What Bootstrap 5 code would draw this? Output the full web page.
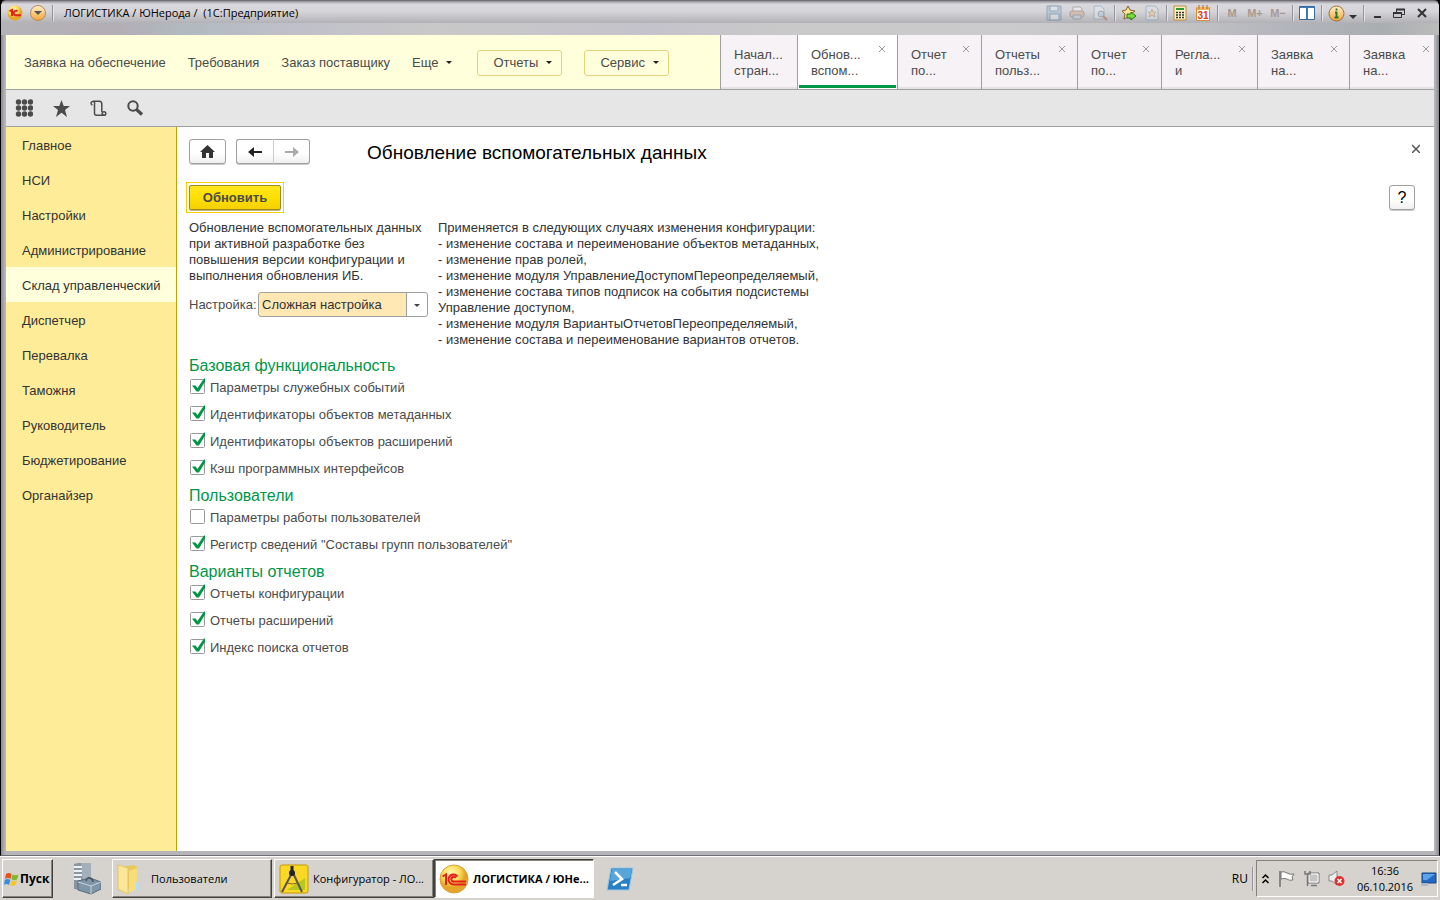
<!DOCTYPE html>
<html lang="ru">
<head>
<meta charset="utf-8">
<meta name="viewport" content="width=device-width, initial-scale=1">
<title>Обновление вспомогательных данных</title>
<link href="https://cdn.jsdelivr.net/npm/bootstrap@5.3.0/dist/css/bootstrap.min.css" rel="stylesheet">
<style>
  :root { --ink:#4b4b4b; --line:#a0a0a0; --green:#009646; --sand:#ffec99; --cream:#ffffdc; }
  body { font: 13px/16px "Liberation Sans", Arial, sans-serif; color:#333; background:#000; }
  button { font: inherit; color: inherit; }
  svg { display:block; flex:none; }
  .bare { border:0; background:none; padding:0; }

  .window-frame { border:1px solid #706d74; border-left-color:#000; border-right-color:#000; border-radius:6px 6px 0 0; background:linear-gradient(90deg,#8e8c91,#b5b4b9 4px,#b5b4b9 calc(100% - 4px),#85888e); padding:0 5px 4px 5px; }
  .caption-bar { height:34px; margin:0 -5px; padding:0 12px 10px 5px; border-radius:5px 5px 0 0; color:#000; font-family:"Open Sans","Noto Sans",sans-serif; font-size:11px;
    background:linear-gradient(#8f8d94,#d9d8dc 3px,#d6d5d9 10px,#b2b1b5 22px,transparent 22px),linear-gradient(90deg,#b4b3b7,#b3adb5 8%,#b1bac0 13%,#bfbfca 20%,#c8c8c8 30%,#c4c3cb 45%,#c9c9c9 55%,#cbcbcd 70%,#c2c2c4 82%,#b2b4bb 90%,#a9aeb0 96%,#bbb); }
  .caption-text { white-space:pre; padding-left:3px; }
  .cmds { gap:7px; }
  .cmds .sep { margin:0 -1px; }
  .sep { width:1px; height:16px; background:#96959b; box-shadow:1px 0 #e4e3e7; }
  .dim { opacity:.45; }
  .mem { color:#a8998f; font:bold 11px/16px "Liberation Sans",sans-serif; min-width:16px; text-align:center; }

  .app-head { background:var(--cream); border-bottom:1px solid var(--line); height:55px; color:var(--ink); }
  .app-head a { color:inherit; text-decoration:none; }
  .app-nav { padding:1px 0 0 18px; gap:22px; }
  .menu-btn { border:1px solid #e5d27c; border-radius:3px; height:26px; width:85px; padding:0 9px 0 15px; }
  .menu-set { gap:22px; margin-left:3px; }
  .tri { width:0; height:0; border:3px solid transparent; border-top-color:#222; border-bottom:0; }
  .wtabs { height:54px; }
  .wtab { position:relative; background:#f7f2f6; border-left:1px solid var(--line); width:96px; padding:12px 0 0 13px; color:var(--ink); text-align:left; box-shadow:inset 0 -2px 1px #e5e1e4; }
  .w-s { width:84px; } .w-m { width:92px; } .w-l { width:100px; } .w-h { width:77px; } .w-e { width:85px; }
  .wtab.open { background:#fff; box-shadow:inset 0 -1px #fff; }
  .wtab.open::after { content:""; position:absolute; left:1px; right:1px; bottom:1px; height:3px; background:var(--green); }
  .wtab .bare { position:absolute; right:12px; top:11px; }
  .w-e .bare { right:5px; }
  .toolstrip { background:#e6e6e6; border-bottom:1px solid var(--line); height:37px; padding:0 9px; gap:20px; color:var(--ink); }

  .sections { width:171px; background:var(--sand); border-right:1px solid #bfa500; }
  .sections a { display:block; height:35px; padding:11px 16px 8px; color:#333; text-decoration:none; white-space:nowrap; }
  .sections a.current { background:var(--cream); }
  .page { background:#fff; padding:12px 14px 0 12px; }
  .nbtn { height:25px; width:37px; border:1px solid var(--line); border-radius:3px; background:linear-gradient(#fff 55%,#f0f0f0); box-shadow:0 1px #c9c9c9; padding:0; }
  .nbtn.help { width:26px; font-size:16px; color:#000; }
  .nav-pair { margin-left:10px; }
  .nav-pair .nbtn + .nbtn { border-left:0; }
  .nav-pair .nbtn:first-child { width:38px; border-right-color:#ccc; }
  .nav-pair .nbtn:last-child { width:36px; }
  .page h1 { font-size:19px; line-height:27px; color:#000; font-weight:400; margin:0 0 0 57px; }
  .page-top { height:25px; }
  .act-row { margin:18px 5px 7px 0; }
  .go-ring { border:1px solid #ffcc00; padding:2px; margin-left:-3px; }
  .go { height:25px; width:92px; border:1px solid #a08a1a; border-radius:2px; background:linear-gradient(#ffe620,#ffe000 50%,#f5d000); box-shadow:0 1px #b9b28a; color:var(--ink); font-weight:700; padding:0; }
  .col-a { width:239px; margin-right:10px; white-space:nowrap; } .col-b { width:390px; }
  .lbl { color:var(--ink); }
  .pick { appearance:none; width:170px; height:25px; border:1px solid var(--line); border-radius:3px; padding:0 24px 0 3px; color:#333; font:inherit;
    background:url("data:image/svg+xml,%3Csvg xmlns='http://www.w3.org/2000/svg' width='21' height='23'%3E%3Cpath fill='%23fff' d='M0 0h21v23H0z'/%3E%3Cpath fill='%23a0a0a0' d='M0 0h1v23H0z'/%3E%3Cpath fill='%23444' d='M8 11h6l-3 3z'/%3E%3C/svg%3E") right center no-repeat #ffe8b4; }
  .page h2 { font-size:16px; line-height:17px; font-weight:400; color:var(--green); margin:0; padding-top:5px; }
  .tick { height:27px; color:var(--ink); }
  .tick input { appearance:none; margin:0 0 0 1px; width:16px; height:20px; background:url("data:image/svg+xml,%3Csvg xmlns='http://www.w3.org/2000/svg' width='16' height='18'%3E%3Crect x='.5' y='1.5' width='14' height='14' rx='1' fill='%23fff' stroke='%23999'/%3E%3C/svg%3E") no-repeat; }
  .tick input:checked { background-image:url("data:image/svg+xml,%3Csvg xmlns='http://www.w3.org/2000/svg' width='16' height='18'%3E%3Crect x='.5' y='1.5' width='14' height='14' rx='1' fill='%23fff' stroke='%23999'/%3E%3Cpath fill='%23009646' d='M2 7.500h3.500l2 2.500L14 .500h1v3L9 13.500H6.500z'/%3E%3C/svg%3E"); }

  .taskbar { height:44px; background:#d6d3ce; border-top:1px solid #fff; padding:2px; color:#000; font:11px/16px "Open Sans","Noto Sans",sans-serif; }
  .task { height:39px; width:160px; border:1px solid; border-color:#fff #404040 #404040 #fff; box-shadow:inset -1px -1px #858279; background:none; padding:0 4px; white-space:nowrap; }
  .task.live { border-color:#404040 #fff #fff #404040; box-shadow:inset 1px 1px #858279; background:#fff; font-weight:700; }
  .task.start { width:51px; padding:0 1px; font-size:12px; font-weight:700; }
  .srv { margin:0 11px 0 20px; }
  .tray { border:1px solid; border-color:#858279 #fff #fff #858279; height:37px; gap:8px; padding:0 0 0 4px; }
  .clock { padding:0 0 0 4px; }
  .lang { font-size:12px; }
  .lang-sep { height:24px; margin:0 3px 0 4px; }
</style>
</head>
<body class="min-vh-100 d-flex flex-column">

<div class="window-frame flex-grow-1 d-flex flex-column">
  <header class="caption-bar d-flex align-items-center">
    <svg width="18" height="18" viewBox="0 0 18 18"><defs><radialGradient id="gold" cx=".4" cy=".3"><stop offset="0" stop-color="#fff8c0"/><stop offset=".6" stop-color="#ffdf58"/><stop offset="1" stop-color="#e6a428"/></radialGradient><linearGradient id="amber" x2="0" y2="1"><stop offset="0" stop-color="#fff0d0"/><stop offset="1" stop-color="#f7a535"/></linearGradient></defs><circle cx="9" cy="9" r="7.500" fill="url(#gold)"/><path d="M3.500 7.200L6 6v6M11.500 7.300a2.300 2.300 0 1 0-1 4H15" fill="none" stroke="#e02418" stroke-width="2"/></svg>
    <svg class="ms-1" width="20" height="18" viewBox="0 0 20 18"><circle cx="10" cy="9" r="7.500" fill="url(#amber)" stroke="#b98a55"/><path d="M6 7h8l-4 4z" fill="#555"/></svg>
    <span class="sep ms-1 me-2"></span>
    <span class="caption-text">ЛОГИСТИКА / ЮНерода /  (1С:Предприятие)</span>
    <div class="cmds d-flex align-items-center ms-auto">
      <button class="bare dim" aria-label="Сохранить"><svg width="16" height="16"><path d="M1 1h14v14H1z" fill="#9bb9d0" stroke="#4a7798"/><path d="M4 1h8v5H4zM4 9h9v6H4z" fill="#e4edf3" stroke="#4a7798"/></svg></button>
      <button class="bare dim" aria-label="Печать"><svg width="16" height="16"><path d="M4 2h7l2 2v4H4z" fill="#fff" stroke="#777"/><rect x="1" y="6" width="14" height="6" rx="2" fill="#d9a98a" stroke="#776a62"/><path d="M4 10h8v4H4z" fill="#b8d0ec" stroke="#777"/></svg></button>
      <button class="bare dim" aria-label="Просмотр"><svg width="16" height="16"><path d="M2 1h7l3 3v10H2z" fill="#e4ebf2" stroke="#6f93b0"/><circle cx="9" cy="9" r="3" fill="#a8c9e4" stroke="#777"/><path d="M11 11l4 4" stroke="#a0522d" stroke-width="2"/></svg></button>
      <span class="sep"></span>
      <button class="bare" aria-label="В избранное"><svg width="16" height="16"><path d="M7 1l2 4 5 1-4 3 1 5-4-2-4 2 1-5-3-3 4-1z" fill="#ffe39a" stroke="#83622a"/><path d="M6 9h4V7l5 4-5 4v-2H6z" fill="#7ddc38" stroke="#277b13"/></svg></button>
      <button class="bare dim" aria-label="Избранное"><svg width="16" height="16" viewBox="-1 0 16 16"><path d="M1 1h9l3 3v11H1z" fill="#e0e6ee" stroke="#7290a8"/><path d="M7 4l1 3h3L9 9l1 3-3-2-3 2 1-3-2-2h3z" fill="#f4d08a" stroke="#93733a" stroke-width=".7"/></svg></button>
      <span class="sep"></span>
      <button class="bare" aria-label="Калькулятор"><svg width="16" height="16"><path d="M1 1h12v14H1z" fill="#fff1c4" stroke="#c08a38"/><path d="M3 3h8v2H3z" fill="#2d9b2d"/><path d="M3 7.500h8M3 10h8M3 12.500h8" stroke="#333" stroke-width="1.500" stroke-dasharray="2 1"/></svg></button>
      <button class="bare" aria-label="Календарь"><svg width="15" height="16"><path d="M.5 2.500h13v13H.5z" fill="#fff" stroke="#d98a3a"/><path d="M1 2h12v3H1z" fill="#f5b45c"/><path d="M3 0v4M7 0v4M11 0v4" stroke="#a86b29"/><text x="7" y="14" text-anchor="middle" font-family="Liberation Sans" font-size="10" font-weight="700" fill="#e03a10">31</text></svg></button>
      <span class="sep"></span>
      <button class="bare mem">M</button><button class="bare mem">M+</button><button class="bare mem">M−</button>
      <span class="sep"></span>
      <button class="bare" aria-label="Панели"><svg width="16" height="14"><path d="M.5 .5h15v13H.5z" fill="#fff" stroke="#3c6b99"/><path d="M1 1h14v1H1z" fill="#3c7ab8"/><path d="M8 2v11" stroke="#3c7ab8" stroke-width="2"/></svg></button>
      <span class="sep"></span>
      <button class="bare d-flex align-items-center gap-1" aria-label="Справка"><svg width="17" height="17" viewBox="0 0 17 17"><circle cx="8.500" cy="8.500" r="7.500" fill="url(#amber)" stroke="#9b7038"/><path d="M8.500 3.500v2M7 7.500h1.500V12M6.500 12.500h4" stroke="#237823" stroke-width="1.800" fill="none"/></svg><svg width="8" height="14"><path d="M0 9h8l-4 4z" fill="#333"/></svg></button>
      <span class="sep"></span>
      <button class="bare" aria-label="Свернуть"><svg width="14" height="12"><path d="M4 10h7" stroke="#333" stroke-width="2"/></svg></button>
      <button class="bare" aria-label="Развернуть"><svg width="15" height="11" viewBox="-2 0 15 11"><path d="M3.500 4V1.500h8v5H9" fill="none" stroke="#333"/><path d="M3 1.500h9M0 5h9" stroke="#333" stroke-width="2"/><path d="M.5 4.500h8v5h-8z" fill="none" stroke="#333"/></svg></button>
      <button class="bare ms-1" aria-label="Закрыть"><svg width="10" height="10"><path d="M1 1l8 8M9 1l-8 8" stroke="#333" stroke-width="2"/></svg></button>
    </div>
  </header>

  <div class="app-head d-flex justify-content-between">
    <nav class="app-nav d-flex align-items-center">
      <a href="#">Заявка на обеспечение</a>
      <a href="#">Требования</a>
      <a href="#">Заказ поставщику</a>
      <a href="#" class="d-flex align-items-center">Еще<span class="tri ms-2"></span></a>
      <div class="menu-set d-flex">
        <button class="menu-btn bg-transparent d-flex align-items-center justify-content-between">Отчеты<span class="tri"></span></button>
        <button class="menu-btn bg-transparent d-flex align-items-center justify-content-between">Сервис<span class="tri"></span></button>
      </div>
    </nav>
    <div class="wtabs d-flex">
      <div class="wtab w-h"><a href="#">Начал...<br>стран...</a></div>
      <div class="wtab w-l open"><a href="#">Обнов...<br>вспом...</a><button class="bare" aria-label="Закрыть"><svg width="6" height="6"><path d="M0 0l6 6M6 0l-6 6" stroke="#999"/></svg></button></div>
      <div class="wtab w-s"><a href="#">Отчет<br>по...</a><button class="bare" aria-label="Закрыть"><svg width="6" height="6"><path d="M0 0l6 6M6 0l-6 6" stroke="#999"/></svg></button></div>
      <div class="wtab"><a href="#">Отчеты<br>польз...</a><button class="bare" aria-label="Закрыть"><svg width="6" height="6"><path d="M0 0l6 6M6 0l-6 6" stroke="#999"/></svg></button></div>
      <div class="wtab w-s"><a href="#">Отчет<br>по...</a><button class="bare" aria-label="Закрыть"><svg width="6" height="6"><path d="M0 0l6 6M6 0l-6 6" stroke="#999"/></svg></button></div>
      <div class="wtab"><a href="#">Регла...<br>и</a><button class="bare" aria-label="Закрыть"><svg width="6" height="6"><path d="M0 0l6 6M6 0l-6 6" stroke="#999"/></svg></button></div>
      <div class="wtab w-m"><a href="#">Заявка<br>на...</a><button class="bare" aria-label="Закрыть"><svg width="6" height="6"><path d="M0 0l6 6M6 0l-6 6" stroke="#999"/></svg></button></div>
      <div class="wtab w-e"><a href="#">Заявка<br>на...</a><button class="bare" aria-label="Закрыть"><svg width="6" height="6"><path d="M0 0l6 6M6 0l-6 6" stroke="#999"/></svg></button></div>
    </div>
  </div>

  <div class="toolstrip d-flex align-items-center">
    <button class="bare" aria-label="Меню функций"><svg width="18" height="18" fill="#4b4b4b"><g id="dots"><circle cx="3.500" cy="3" r="2.700"/><circle cx="9.500" cy="3" r="2.700"/><circle cx="15.500" cy="3" r="2.700"/></g><use href="#dots" y="6"/><use href="#dots" y="12"/></svg></button>
    <button class="bare" aria-label="Избранное"><svg width="17" height="17" viewBox="0 0 17 17"><path d="M8.500 0l2.200 6H17l-5 3.900L14 17l-5.500-4.300L3 17l2-7.100L0 6h6.300z" fill="#4b4b4b"/></svg></button>
    <button class="bare" aria-label="История"><svg width="17" height="17" viewBox="0 0 17 17" fill="none" stroke="#4b4b4b" stroke-width="1.500"><path d="M4.500 4V13.500Q4.500 15.200 6.500 15.200H14M4.500 4A1.800 1.800 0 1 0 2.500 5M2.500 1.200H9.500Q11.800 1.200 11.800 4V12"/><circle cx="14" cy="13.500" r="1.800"/></svg></button>
    <button class="bare" aria-label="Поиск"><svg width="17" height="17" viewBox="0 0 17 17" fill="none" stroke="#4b4b4b"><circle cx="6" cy="6" r="4.700" stroke-width="2"/><path d="M9.500 9.500l5.500 5" stroke-width="3.200"/></svg></button>
  </div>

  <div class="d-flex flex-grow-1">
    <nav class="sections flex-shrink-0">
      <a href="#">Главное</a><a href="#">НСИ</a><a href="#">Настройки</a><a href="#">Администрирование</a><a href="#" class="current">Склад управленческий</a><a href="#">Диспетчер</a><a href="#">Перевалка</a><a href="#">Таможня</a><a href="#">Руководитель</a><a href="#">Бюджетирование</a><a href="#">Органайзер</a>
    </nav>
    <main class="page flex-grow-1">
      <div class="page-top d-flex align-items-start">
        <button class="nbtn d-flex align-items-center justify-content-center" aria-label="Домой"><svg width="15" height="13"><path d="M7.500 0L15 7h-2v6H9V8H6v5H2V7H0z" fill="#333"/></svg></button>
        <div class="btn-group nav-pair">
          <button class="nbtn rounded-end-0 d-flex align-items-center justify-content-center" aria-label="Назад"><svg width="14" height="10"><path d="M0 5l6-5v4h8v2H6v4z" fill="#222"/></svg></button>
          <button class="nbtn rounded-start-0 d-flex align-items-center justify-content-center" aria-label="Вперед"><svg width="14" height="10"><path d="M14 5L8 0v4H0v2h8v4z" fill="#aaa"/></svg></button>
        </div>
        <h1>Обновление вспомогательных данных</h1>
        <button class="bare ms-auto pt-1" aria-label="Закрыть"><svg width="8" height="10" viewBox="0 -2 8 10"><path d="M0 0l8 8M8 0l-8 8" stroke="#555" stroke-width="1.500"/></svg></button>
      </div>
      <div class="act-row d-flex align-items-center justify-content-between">
        <div class="go-ring"><button class="go">Обновить</button></div>
        <button class="nbtn help">?</button>
      </div>
      <div class="d-flex">
        <div class="col-a">
          <p class="m-0">Обновление вспомогательных данных<br>при активной разработке без<br>повышения версии конфигурации и<br>выполнения обновления ИБ.</p>
          <div class="d-flex align-items-center justify-content-between mt-2">
            <label for="mode" class="lbl">Настройка:</label>
            <select id="mode" class="pick"><option>Сложная настройка</option></select>
          </div>
        </div>
        <p class="col-b m-0">Применяется в следующих случаях изменения конфигурации:<br>- изменение состава и переименование объектов метаданных,<br>- изменение прав ролей,<br>- изменение модуля УправлениеДоступомПереопределяемый,<br>- изменение состава типов подписок на события подсистемы<br>Управление доступом,<br>- изменение модуля ВариантыОтчетовПереопределяемый,<br>- изменение состава и переименование вариантов отчетов.</p>
      </div>
      <section class="pt-1">
        <h2>Базовая функциональность</h2>
        <label class="tick d-flex align-items-center gap-1"><input type="checkbox" checked>Параметры служебных событий</label>
        <label class="tick d-flex align-items-center gap-1"><input type="checkbox" checked>Идентификаторы объектов метаданных</label>
        <label class="tick d-flex align-items-center gap-1"><input type="checkbox" checked>Идентификаторы объектов расширений</label>
        <label class="tick d-flex align-items-center gap-1"><input type="checkbox" checked>Кэш программных интерфейсов</label>
        <h2>Пользователи</h2>
        <label class="tick d-flex align-items-center gap-1"><input type="checkbox">Параметры работы пользователей</label>
        <label class="tick d-flex align-items-center gap-1"><input type="checkbox" checked>Регистр сведений "Составы групп пользователей"</label>
        <h2>Варианты отчетов</h2>
        <label class="tick d-flex align-items-center gap-1"><input type="checkbox" checked>Отчеты конфигурации</label>
        <label class="tick d-flex align-items-center gap-1"><input type="checkbox" checked>Отчеты расширений</label>
        <label class="tick d-flex align-items-center gap-1"><input type="checkbox" checked>Индекс поиска отчетов</label>
      </section>
    </main>
  </div>
</div>

<footer class="taskbar d-flex align-items-center">
  <button class="task start d-flex align-items-center"><svg width="16" height="16" viewBox="0 0 16 16"><path d="M2 3q3-2 5.500 0L6.500 8Q4 6 1 8z" fill="#e8501e"/><path d="M8.500 3.500q3 1.500 6 0L13 8.500q-3 1.500-5.500 0z" fill="#7cba2c"/><path d="M.8 9q3-2 5.500 0L5 14q-2.500-2-5 0z" fill="#3b8ade"/><path d="M7.300 9.500q3 1.500 5.700 0L11.500 14q-3 1.500-5.500 0z" fill="#fbc521"/></svg>Пуск</button>
  <button class="bare srv" aria-label="Диспетчер сервера"><svg width="28" height="32"><path d="M1 1l4-1h13v22l-5 6-12-2z" fill="#8695a0"/><path d="M8 0h10v20H10z" fill="#a3b0ba"/><path d="M1 4h8M1 8h8M1 12h8M1 16h7" stroke="#eef2f5" stroke-width="2"/><path d="M5 18l12-3 11 4v7l-10 5-13-4z" fill="#7f95a8" stroke="#566b7a"/><path d="M5 19l13 4 10-4M18 23v8" stroke="#c7d3dc" fill="none"/><path d="M13 18q1-4 4-3t3 4" fill="none" stroke="#46525c" stroke-width="1.500"/></svg></button>
  <button class="task d-flex align-items-center"><svg class="me-2" width="26" height="32"><path d="M9 3l8-1 3 2v18l-10 5z" fill="#e8c95c"/><path d="M1 2l10 3v26L1 26z" fill="#fbe79a" stroke="#e5c65c"/><path d="M12 8l8-3v21l-8 4z" fill="#f7dd7c"/><path d="M19 19h3v8h-3z" fill="#b8dcf0"/></svg>Пользователи</button>
  <button class="task d-flex align-items-center" style="margin-left:2px"><svg class="me-1" width="30" height="30"><rect x="1" y="1" width="28" height="28" rx="2" fill="#fbd825" stroke="#c59a00"/><path d="M8 26h18V14z" fill="#b6c820"/><path d="M13 9L3 28M14 9l9 19" stroke="#555" stroke-width="2"/><path d="M13 2v5" stroke="#222" stroke-width="3"/><circle cx="13" cy="9" r="3" fill="#222"/><path d="M8 19q5 2 11 0" fill="none" stroke="#7a6720"/></svg>Конфигуратор - ЛО...</button>
  <button class="task live d-flex align-items-center"><svg class="me-1" width="30" height="30" viewBox="0 0 30 30"><circle cx="15" cy="15" r="14" fill="url(#gold)" stroke="#d6a13a"/><path d="M3.500 12.500L7 10.500V21M18.500 12.500A5 5 0 1 0 15 20.500H27M16.800 14A2.400 2.400 0 1 0 15 17.600H27" fill="none" stroke="#e3231b" stroke-width="2"/></svg>ЛОГИСТИКА / ЮНе...</button>
  <button class="bare ms-2 ps-1" aria-label="PowerShell"><svg width="28" height="24"><path d="M5 1h22l-4 22H1z" fill="#2a80c4" stroke="#9cc8e8"/><path d="M6 2h20l-2 9-20 3z" fill="#58a5dc"/><path d="M9 5l7 7-9 6M15 18h6" fill="none" stroke="#fff" stroke-width="2.500"/></svg></button>
  <div class="d-flex align-items-center ms-auto">
    <span class="lang">RU</span><span class="sep lang-sep"></span>
    <div class="tray d-flex align-items-center">
      <svg width="9" height="12"><path d="M1.500 5l3-3 3 3M1.500 10l3-3 3 3" fill="none" stroke="#000" stroke-width="1.500"/></svg>
      <svg width="17" height="18"><path d="M2 1v16" stroke="#888" stroke-width="2"/><path d="M3 2q3-1 6 1 3 2 7 1l-2 3 1 3q-4 1-6-1-3-1-6 0z" fill="#fff" stroke="#777"/></svg>
      <svg width="17" height="17"><path d="M5 3h11v10H5z" fill="#c5c5c5" stroke="#777"/><path d="M6 4h9v8H6z" fill="none" stroke="#fff"/><path d="M2 1v3h5V1M4.500 4v12M8 15.500h6" fill="none" stroke="#777" stroke-width="1.500"/></svg>
      <svg width="17" height="17"><path d="M1 5h3l5-4v14l-5-4H1z" fill="#eee" stroke="#888"/><circle cx="11.500" cy="11" r="5" fill="#e03030"/><path d="M9.500 9l4 4M13.500 9l-4 4" stroke="#fff" stroke-width="1.500"/></svg>
      <span class="clock text-center">16:36<br>06.10.2016</span>
      <svg width="16" height="14"><path d="M1 1h14v10H1z" fill="#2368c4" stroke="#164684"/><path d="M2 2h12L6 8H2z" fill="#5ea3e8"/><path d="M0 11h7v3H0z" fill="#a9bac5"/></svg>
    </div>
  </div>
</footer>
<script src="https://cdn.jsdelivr.net/npm/bootstrap@5.3.0/dist/js/bootstrap.bundle.min.js"></script>
</body>
</html>
